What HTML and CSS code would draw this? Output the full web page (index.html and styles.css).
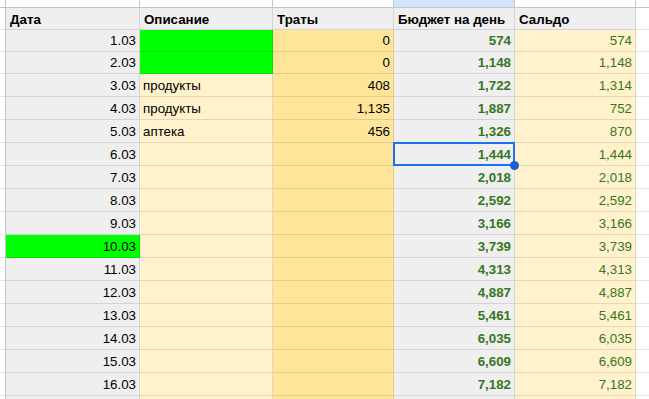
FILE: index.html
```html
<!DOCTYPE html>
<html lang="ru">
<head>
<meta charset="utf-8">
<title>Бюджет</title>
<link rel="stylesheet" href="styles.css">
</head>
<body>
<div class="sheet">
  <div class="cell top rh"></div><div class="cell top"></div><div class="cell top"></div><div class="cell top"></div><div class="cell top sel-col"></div><div class="cell top"></div><div class="cell top last"></div>

  <div class="cell rh"></div><div class="cell hd">Дата</div><div class="cell hd">Описание</div><div class="cell hd">Траты</div><div class="cell hd">Бюджет на день</div><div class="cell hd">Сальдо</div><div class="cell last"></div>

  <div class="cell rh"></div><div class="cell ca">1.03</div><div class="cell cb green"></div><div class="cell cc">0</div><div class="cell cd">574</div><div class="cell ce">574</div><div class="cell last"></div>
  <div class="cell rh"></div><div class="cell ca">2.03</div><div class="cell cb green"></div><div class="cell cc">0</div><div class="cell cd">1,148</div><div class="cell ce">1,148</div><div class="cell last"></div>
  <div class="cell rh"></div><div class="cell ca">3.03</div><div class="cell cb">продукты</div><div class="cell cc">408</div><div class="cell cd">1,722</div><div class="cell ce">1,314</div><div class="cell last"></div>
  <div class="cell rh"></div><div class="cell ca">4.03</div><div class="cell cb">продукты</div><div class="cell cc">1,135</div><div class="cell cd">1,887</div><div class="cell ce">752</div><div class="cell last"></div>
  <div class="cell rh"></div><div class="cell ca">5.03</div><div class="cell cb">аптека</div><div class="cell cc">456</div><div class="cell cd">1,326</div><div class="cell ce">870</div><div class="cell last"></div>
  <div class="cell rh"></div><div class="cell ca">6.03</div><div class="cell cb"></div><div class="cell cc"></div><div class="cell cd selected">1,444<span class="sel-box"></span><span class="handle"></span></div><div class="cell ce">1,444</div><div class="cell last"></div>
  <div class="cell rh"></div><div class="cell ca">7.03</div><div class="cell cb"></div><div class="cell cc"></div><div class="cell cd">2,018</div><div class="cell ce">2,018</div><div class="cell last"></div>
  <div class="cell rh"></div><div class="cell ca">8.03</div><div class="cell cb"></div><div class="cell cc"></div><div class="cell cd">2,592</div><div class="cell ce">2,592</div><div class="cell last"></div>
  <div class="cell rh"></div><div class="cell ca">9.03</div><div class="cell cb"></div><div class="cell cc"></div><div class="cell cd">3,166</div><div class="cell ce">3,166</div><div class="cell last"></div>
  <div class="cell rh"></div><div class="cell ca green">10.03</div><div class="cell cb"></div><div class="cell cc"></div><div class="cell cd">3,739</div><div class="cell ce">3,739</div><div class="cell last"></div>
  <div class="cell rh"></div><div class="cell ca">11.03</div><div class="cell cb"></div><div class="cell cc"></div><div class="cell cd">4,313</div><div class="cell ce">4,313</div><div class="cell last"></div>
  <div class="cell rh"></div><div class="cell ca">12.03</div><div class="cell cb"></div><div class="cell cc"></div><div class="cell cd">4,887</div><div class="cell ce">4,887</div><div class="cell last"></div>
  <div class="cell rh"></div><div class="cell ca">13.03</div><div class="cell cb"></div><div class="cell cc"></div><div class="cell cd">5,461</div><div class="cell ce">5,461</div><div class="cell last"></div>
  <div class="cell rh"></div><div class="cell ca">14.03</div><div class="cell cb"></div><div class="cell cc"></div><div class="cell cd">6,035</div><div class="cell ce">6,035</div><div class="cell last"></div>
  <div class="cell rh"></div><div class="cell ca">15.03</div><div class="cell cb"></div><div class="cell cc"></div><div class="cell cd">6,609</div><div class="cell ce">6,609</div><div class="cell last"></div>
  <div class="cell rh"></div><div class="cell ca">16.03</div><div class="cell cb"></div><div class="cell cc"></div><div class="cell cd">7,182</div><div class="cell ce">7,182</div><div class="cell last"></div>
  <div class="cell rh"></div><div class="cell ca"></div><div class="cell cb"></div><div class="cell cc"></div><div class="cell cd"></div><div class="cell ce"></div><div class="cell last"></div>
</div>
</body>
</html>
```
FILE: styles.css
```css
html, body {
  margin: 0;
  padding: 0;
  background: #ffffff;
  overflow: hidden;
}

.sheet {
  display: grid;
  grid-template-columns: 6px 134px 133px 121px 121px 121px 1fr;
  grid-template-rows: 8px 22px 22px 22px repeat(14, 23px) 23px;
  width: 649px;
  height: 399px;
  overflow: hidden;
  font-family: "Liberation Sans", Arial, sans-serif;
  font-size: 13.33px;
  line-height: 15px;
  color: #000;
}

.cell {
  box-sizing: border-box;
  border-right: 1px solid rgba(0, 0, 0, 0.11);
  border-bottom: 1px solid rgba(0, 0, 0, 0.11);
  display: flex;
  align-items: flex-end;
  padding: 0 3px 3px 3px;
  white-space: nowrap;
  overflow: visible;
  min-width: 0;
}

.top {
  background: #ffffff;
  border-right-color: #c7c7c7;
  border-bottom-color: #c4c4c4;
  padding: 0;
}

.sel-col {
  background: #d3e3fd;
}

.rh {
  background: #ffffff;
  border-right-color: #c4c4c4;
  padding: 0;
}

.last {
  border-right: none;
  background: #ffffff;
  padding: 0;
}

.hd {
  background: #efefef;
  font-weight: bold;
  padding: 0 4px 2px 4px;
}

.ca {
  background: #efefef;
  justify-content: flex-end;
}

.cb {
  background: #fff2cc;
}

.cc {
  background: #ffe599;
  justify-content: flex-end;
}

.cd {
  background: #efefef;
  justify-content: flex-end;
  color: #38761d;
  font-weight: bold;
}

.ce {
  background: #fff2cc;
  justify-content: flex-end;
  color: #38761d;
}

.green {
  background: #00ff00;
}

.selected {
  position: relative;
}

.sel-box {
  position: absolute;
  top: -1px;
  left: -1px;
  right: -1px;
  bottom: -1px;
  border: 2px solid #1a73e8;
  pointer-events: none;
}

.handle {
  position: absolute;
  right: -5px;
  bottom: -5px;
  width: 9px;
  height: 9px;
  border-radius: 50%;
  background: #1a5fd6;
  z-index: 2;
}
```
